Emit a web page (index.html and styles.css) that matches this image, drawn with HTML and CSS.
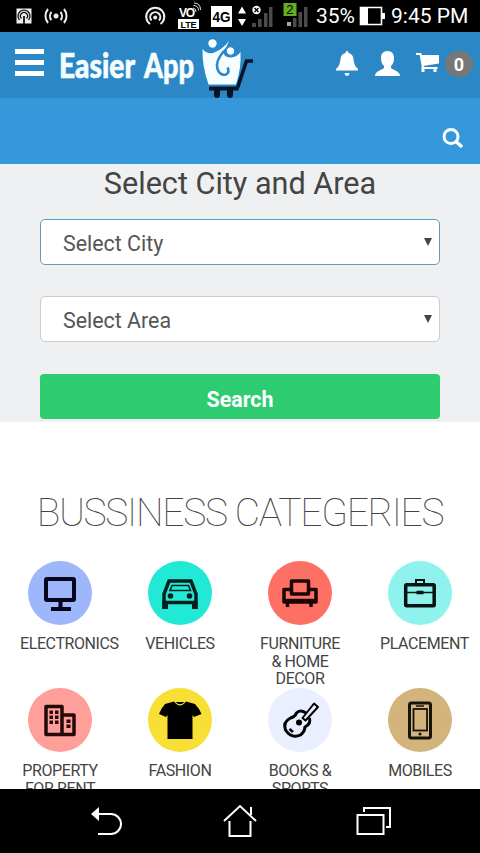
FILE: index.html
```html
<!DOCTYPE html>
<html lang="en">
<head>
  <meta charset="UTF-8" />
  <meta name="viewport" content="width=device-width, initial-scale=1" />
  <title>Easier App</title>
  <link rel="stylesheet" href="styles.css">
</head>
<body>
  <div class="status-bar">
    <svg class="status-icons" width="315" height="32" viewBox="0 0 315 32">
      <!-- hotspot + tether -->
      <rect x="16.500" y="8.500" width="15" height="15" fill="#eee" />
      <g fill="none" stroke="#111" stroke-width="1.300">
        <path d="M19.500 20a6 6 0 1 1 9 0M21.500 18.500a3.500 3.500 0 1 1 5 0" />
        <path d="M24 16v8" stroke-width="1.800" />
      </g>
      <g fill="none" stroke="#eee" stroke-width="2">
        <path d="M51.500 12a6 6 0 0 0 0 8M48 9a11 11 0 0 0 0 14M60.500 12a6 6 0 0 1 0 8M64 9a11 11 0 0 1 0 14" />
        <path d="M150 24a9 9 0 1 1 10.500 0M151.500 20.500a5 5 0 1 1 7.500 0" />
      </g>
      <circle cx="56" cy="16" r="2.500" fill="#eee" />
      <circle cx="155.200" cy="17.500" r="2" fill="#eee" />
      <text class="vo" x="179" y="17" textLength="16">VO</text>
      <path d="M193 8q3 0 3 4M193.500 5.500q5 0 5 5M194 3q6.500 0 6.500 7" fill="none" stroke="#ddd" stroke-width="1" />
      <rect x="178" y="19" width="21" height="10" fill="#fff" />
      <text class="lte" x="180.500" y="27.500" textLength="16">LTE</text>
      <rect x="211" y="6" width="21" height="21" fill="#fff" />
      <text class="net" x="212.500" y="21.500" textLength="18" lengthAdjust="spacingAndGlyphs">4G</text>
      <path d="M238 13.500l4-7 4 7zM238 19h8l-4 7z" fill="#fff" />
      <g fill="#4b4b4b">
        <path d="M252 23h4v4h-4zM258 19h3.500v8h-3.500zM264 13h3.500v14h-3.500zM269 7h3.500v20h-3.500z" />
        <path d="M293 18h3.500v9h-3.500zM298.500 12h3.500v15h-3.500zM304 7h3.500v20h-3.500z" />
      </g>
      <circle cx="256.500" cy="10" r="4.200" fill="#fff" />
      <path d="M254.500 8l4 4M258.500 8l-4 4" stroke="#000" stroke-width="1.400" />
      <rect x="287" y="22" width="4" height="4" fill="#9aab90" />
      <rect x="283.500" y="3" width="13" height="13" fill="#63ad22" />
      <text class="sim" x="286.300" y="14">2</text>
    </svg>
    <span class="percent">35%</span>
    <svg class="battery" width="27" height="20" viewBox="0 0 27 20">
      <path d="M1.500 1.500h21v17h-21zM24 7v6" fill="none" stroke="#fff" stroke-width="1.600" />
      <path d="M1 1h8v18H1zM23 7h3v6h-3z" fill="#fff" />
    </svg>
    <span class="clock">9:45 PM</span>
  </div>

  <header class="top-nav">
    <button class="menu-btn" aria-label="Menu"><span></span><span></span><span></span></button>
    <svg class="logo" width="198" height="66" viewBox="56 32 198 66">
      <text class="logo-text" x="59" y="77.500" textLength="76" lengthAdjust="spacingAndGlyphs">Easier</text>
      <text class="logo-text" x="144" y="77.500" textLength="50" lengthAdjust="spacingAndGlyphs">App</text>
      <g fill="none" stroke="#071426">
        <path d="M253 61h-6.500L237.500 88" stroke-width="3.500" />
        <path d="M209 88.500h29.500" stroke-width="4" />
      </g>
      <path d="M214 90h6v4h-6zM227 90h6v4h-6z" fill="#071426" />
      <circle cx="217" cy="95" r="3" fill="#071426" />
      <circle cx="230" cy="95" r="3" fill="#071426" />
      <path d="M202.500 49Q206 54 213 53Q222 50 229 41Q227 47 223 51Q224 58 231 57.500Q237 57 240.500 52Q241.500 68 236 84.500H208.500Q202 66 202.500 49z" fill="#f4fdff" />
      <path d="M224 51Q215 61 217.500 69Q220 76 226 74.500Q230 72 227.500 67.500" fill="none" stroke="#2b87c5" stroke-width="2.600" />
      <circle cx="212.500" cy="43.500" r="4.200" fill="#f4fdff" />
      <circle cx="230.500" cy="51" r="4.200" fill="#f4fdff" stroke="#2b87c5" stroke-width="1" />
    </svg>
    <div class="nav-icons">
      <svg width="22" height="26" viewBox="0 0 22 26" fill="#fff">
        <path d="M11 0q1.500 0 1.500 2Q17 3 17.500 8Q18 15 22 18v1.500H0V18Q4 15 4.500 8Q5 3 9.500 2Q9.500 0 11 0zM8.500 22h5q-.5 3-2.500 3t-2.500-3z" />
      </svg>
      <svg width="25" height="26" viewBox="0 0 25 26" fill="#fff">
        <path d="M12.500 0C17 0 19 3 19 7c0 4-1 6-3 8v2c2 2 9 3 9 8H0c0-5 7-6 9-8v-2c-2-2-3-4-3-8 0-4 2-7 6.500-7z" />
      </svg>
      <svg width="23" height="22" viewBox="0 0 23 22">
        <path d="M4 3H23v8.500L7 14z" fill="#fff" />
        <path d="M0 2h4.500L7 16h14.500" fill="none" stroke="#fff" stroke-width="2" />
        <path d="M5.500 15h3v5h-3zM17.500 15h3v5h-3z" fill="#fff" />
      </svg>
      <span class="cart-count">0</span>
    </div>
  </header>

  <div class="search-bar">
    <svg width="22" height="22" viewBox="0 0 22 22" fill="none" stroke="#fff" stroke-width="3">
      <circle cx="9" cy="8.500" r="7" />
      <path d="M14 13.500l6 5.500" stroke-width="3.500" />
    </svg>
  </div>

  <section class="location">
    <h1>Select City and Area</h1>
    <div class="select active"><span>Select City</span><i class="arrow"></i></div>
    <div class="select"><span>Select Area</span><i class="arrow"></i></div>
    <button class="search-btn">Search</button>
  </section>

  <section class="categories">
    <h2>BUSSINESS CATEGERIES</h2>
    <div class="grid">
      <div class="category">
        <div class="circle electronics">
          <svg width="64" height="64" viewBox="0 0 64 64" fill="none" stroke="#05051c" stroke-width="4">
            <rect x="18" y="18" width="28" height="21" rx="1" />
            <path d="M32.500 39v8M23 48h20" />
          </svg>
        </div>
        <p>ELECTRONICS</p>
      </div>
      <div class="category">
        <div class="circle vehicles">
          <svg width="64" height="64" viewBox="0 0 64 64" fill="none" stroke="#04201d" stroke-width="3.500">
            <path d="M16 48V33l5-13h22L48 33v15M16 41.500h32" />
            <path d="M24 24.500h16.500l2 5h-20.500z" stroke-width="1.600" />
            <path d="M14.500 40H20v8h-5.500zM44 40h5.500v8H44z" fill="#04201d" stroke="none" />
            <circle cx="22.500" cy="35" r="2.800" fill="#04201d" stroke="none" />
            <circle cx="41.500" cy="35" r="2.800" fill="#04201d" stroke="none" />
          </svg>
        </div>
        <p>VEHICLES</p>
      </div>
      <div class="category">
        <div class="circle furniture">
          <svg width="64" height="64" viewBox="0 0 64 64" fill="none" stroke="#1c0505" stroke-width="3.500" stroke-linejoin="round">
            <path d="M23.500 33V20H40.500v13z" />
            <path d="M23 28.500h-7V41h32V28.500h-7M16 39.500h32" />
            <path d="M19.500 42v4M43 42v4" />
          </svg>
        </div>
        <p>FURNITURE &amp; HOME DECOR</p>
      </div>
      <div class="category">
        <div class="circle placement">
          <svg width="64" height="64" viewBox="0 0 64 64" fill="none" stroke="#061413" stroke-width="3.500">
            <rect x="17.700" y="23.700" width="28.500" height="21" rx="1" />
            <path d="M28 23v-4h8v4" stroke-width="2" />
            <path d="M18 31.500h28" stroke-width="1.500" />
            <path d="M28.500 31.500h7" />
          </svg>
        </div>
        <p>PLACEMENT</p>
      </div>
      <div class="category">
        <div class="circle property">
          <svg width="64" height="64" viewBox="0 0 64 64" fill="none" stroke="#240a0a" stroke-width="3.500" stroke-linejoin="round">
            <path d="M18 46.500v-28h16v28zM34 27h12v19.500H34" />
            <path d="M21.500 22.500h3.500v3.500h-3.500zM27 22.500h3.500v3.500h-3.500zM21.500 27.500h3.500v3.500h-3.500zM27 27.500h3.500v3.500h-3.500zM21.500 32.500h3.500v3.500h-3.500zM27 32.500h3.500v3.500h-3.500zM38.500 31.500h4v3.500h-4zM38.500 36.500h4v3.500h-4z" fill="#240a0a" stroke="none" />
          </svg>
        </div>
        <p>PROPERTY FOR RENT</p>
      </div>
      <div class="category">
        <div class="circle fashion">
          <svg width="64" height="64" viewBox="0 0 64 64">
            <path d="M26 13.500q6 8 12 0l9 2.500q4 4 6.500 10l-7.500 3-1.500-2V51h-25V27L18 29l-7-3q2.500-6 6-10z" fill="#000" />
            <path d="M27.500 14h9q-4.500 4.500-9 0z" fill="#000" />
          </svg>
        </div>
        <p>FASHION</p>
      </div>
      <div class="category">
        <div class="circle books">
          <svg width="64" height="64" viewBox="0 0 64 64" fill="none" stroke="#000" stroke-width="3">
            <path d="M38 25q-6-4-9.500 0-1.500 4-6 5-8 4-5 12 6 9 15 5 4-3 4.500-8 6-3 4.500-9" />
            <path d="M34.500 30L46 15.500l4 3.500L37.500 32.500z" stroke-width="2" stroke-linejoin="round" />
            <circle cx="31" cy="34.500" r="3" fill="#000" stroke="none" />
            <path d="M21.500 41l3.500 3" stroke-width="2.500" />
          </svg>
        </div>
        <p>BOOKS &amp; SPORTS</p>
      </div>
      <div class="category">
        <div class="circle mobiles">
          <svg width="64" height="64" viewBox="0 0 64 64" fill="none" stroke="#17120a" stroke-width="3">
            <rect x="21.500" y="15" width="21" height="35" rx="2" />
            <rect x="25.500" y="21" width="13.500" height="21.500" stroke-width="1.800" />
            <path d="M28 18h8" stroke-width="1.500" />
            <circle cx="32" cy="46" r="1.500" fill="#17120a" stroke="none" />
          </svg>
        </div>
        <p>MOBILES</p>
      </div>
    </div>
  </section>

  <nav class="android-nav">
    <svg width="32" height="32" viewBox="0 0 32 32" fill="none" stroke="#fff" stroke-width="2">
      <path d="M7 9h13a10 10 0 0 1 0 20H7" />
      <path d="M0 9l8-7v14z" fill="#fff" stroke="none" />
    </svg>
    <svg width="34" height="34" viewBox="0 0 34 34" fill="none" stroke="#fff" stroke-width="2">
      <path d="M1 17L17 2l16 15M28 11V3M6.500 17v15h21V17" />
    </svg>
    <svg width="35" height="30" viewBox="0 0 35 30" fill="none" stroke="#fff" stroke-width="2">
      <path d="M1.500 9h26v19h-26zM8 6V2h26v19h-4" />
    </svg>
  </nav>
</body>
</html>
```

FILE: styles.css
```css
* {
  box-sizing: border-box;
}

body {
  margin: 0;
  height: 853px;
  display: flex;
  flex-direction: column;
  overflow: hidden;
  font-family: Roboto, sans-serif;
  background: #fff;
  color: #444;
}

svg {
  display: block;
  flex: none;
}

button {
  border: none;
  padding: 0;
  font-family: inherit;
}

/* Phone status bar */
.status-bar {
  flex: none;
  height: 32px;
  display: flex;
  align-items: center;
  background: #000;
  color: #fff;
  font-size: 21px;
  white-space: nowrap;
}

.status-icons text {
  font-family: "Liberation Sans", sans-serif;
  font-weight: bold;
}

.vo {
  font-size: 12px;
  fill: #fff;
}

.lte {
  font-size: 9px;
}

.net {
  font-size: 15px;
}

.status-icons .sim {
  font-size: 13px;
  font-weight: normal;
}

.percent {
  width: 44px;
  padding-left: 1px;
}

.battery {
  margin-right: 5px;
}

/* Header */
.top-nav {
  flex: none;
  height: 66px;
  display: flex;
  padding-left: 15px;
  background: #2b87c5;
}

.menu-btn {
  width: 29px;
  height: 27px;
  margin: 17px 12px 0 0;
  display: flex;
  flex-direction: column;
  justify-content: space-between;
  background: none;
}

.menu-btn span {
  width: 29px;
  height: 5px;
  background: #fff;
}

.logo-text {
  font-family: Lato, sans-serif;
  font-weight: 900;
  font-size: 34px;
  fill: #f4fdff;
  stroke: #f4fdff;
  stroke-width: 0.6px;
}

.nav-icons {
  display: flex;
  margin-left: 82px;
  padding-top: 19px;
}

.nav-icons svg:nth-child(2) {
  margin: 0 16px 0 17px;
}

.nav-icons svg:nth-child(3) {
  margin-top: 1px;
}

.cart-count {
  width: 28px;
  height: 26px;
  margin-left: 6px;
  border-radius: 13px;
  background: #777;
  color: #fff;
  font-size: 18px;
  font-weight: bold;
  line-height: 27px;
  text-align: center;
}

.search-bar {
  flex: none;
  height: 66px;
  padding: 30px 16px 0 0;
  display: flex;
  justify-content: flex-end;
  background: #3498db;
}

/* City and area form */
.location {
  flex: none;
  height: 258px;
  padding: 0 40px;
  background: #eef0f2;
}

.location h1 {
  margin: 0;
  height: 55px;
  font-size: 30.6px;
  font-weight: normal;
  line-height: 39px;
  text-align: center;
  white-space: nowrap;
}

.select {
  height: 46px;
  margin-bottom: 31px;
  padding: 2px 7px 0 22px;
  display: flex;
  align-items: center;
  justify-content: space-between;
  background: #fff;
  border: 1.5px solid #c8cdd2;
  border-radius: 5px;
  font-size: 21.4px;
  color: #555;
}

.select.active {
  border-color: #5a9cc2;
}

.arrow {
  margin-bottom: 2px;
  border: 4px solid transparent;
  border-top: 8px solid #444;
  border-bottom: none;
}

.search-btn {
  display: block;
  width: 100%;
  height: 45px;
  margin-top: 32px;
  padding-top: 5px;
  background: #2ecc71;
  border-radius: 4px;
  color: #fff;
  font-size: 21.4px;
  font-weight: bold;
}

/* Categories */
.categories {
  flex: 1;
  min-height: 0;
  overflow: hidden;
  background: #fff;
}

.categories h2 {
  margin: 66px 0 22px;
  font-size: 39px;
  font-weight: 100;
  line-height: 51px;
  letter-spacing: -1.3px;
  text-align: center;
  white-space: nowrap;
}

.grid {
  display: grid;
  grid-template-columns: repeat(4, 120px);
}

.category {
  padding: 0 20px;
  display: flex;
  flex-direction: column;
  align-items: center;
}

.circle {
  width: 64px;
  height: 64px;
  border-radius: 50%;
}

.category p {
  margin: 10px 0 0.5px;
  font-size: 16px;
  line-height: 17.5px;
  letter-spacing: -0.4px;
  text-align: center;
}

/* long names start at the column edge */
.category:first-child p,
.category:nth-child(4) p {
  align-self: flex-start;
}

.electronics {
  background: #9db7fa;
}

.vehicles {
  background: #22e8d6;
}

.furniture {
  background: #ff7064;
}

.placement {
  background: #8ff2ec;
}

.property {
  background: #ff9f99;
}

.fashion {
  background: #f7df36;
}

.books {
  background: #e9efff;
}

.mobiles {
  background: #d2b47c;
}

/* Phone buttons */
.android-nav {
  flex: none;
  height: 64px;
  padding: 0 89px 0 91px;
  display: flex;
  align-items: center;
  justify-content: space-between;
  background: #000;
}
```
